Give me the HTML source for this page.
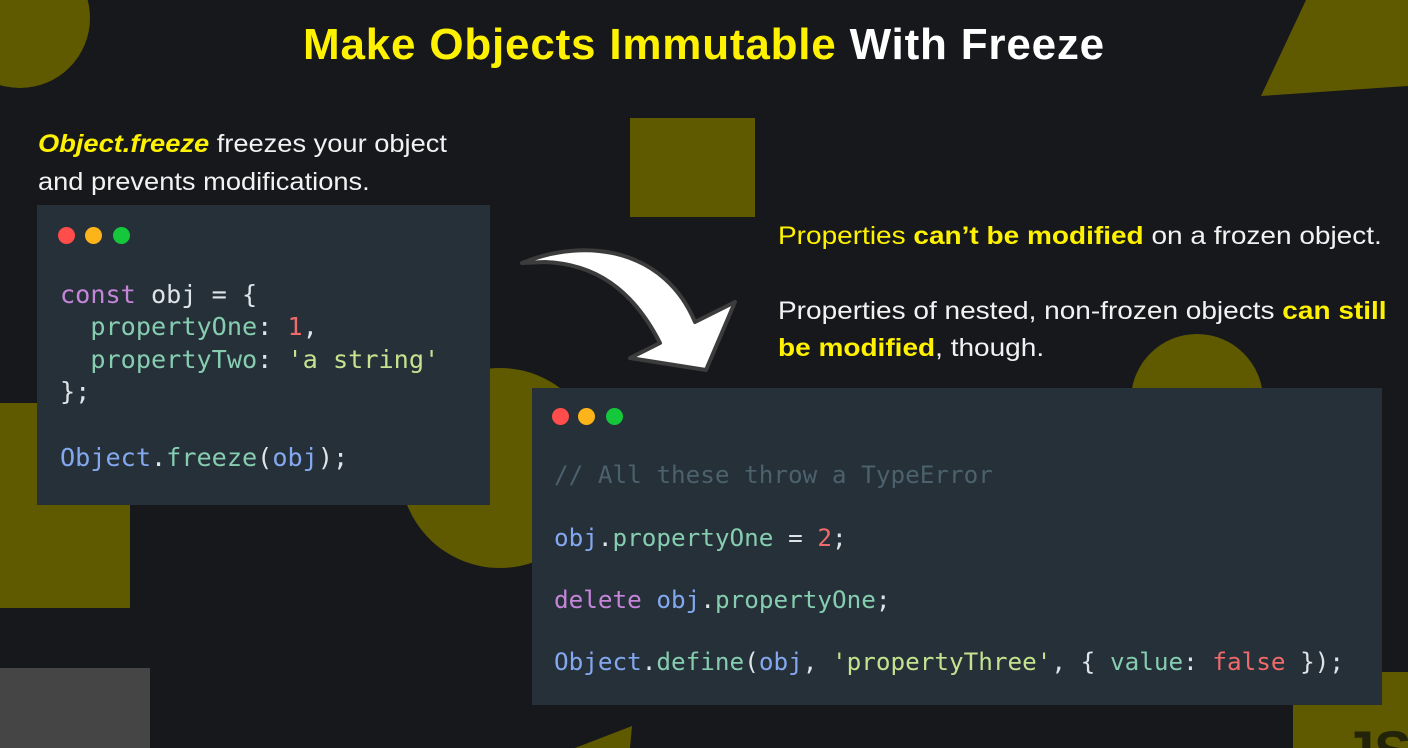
<!DOCTYPE html>
<html><head><meta charset="utf-8"><style>
*{margin:0;padding:0}
html,body{width:1408px;height:748px;overflow:hidden}
body{background:#17181c;position:relative;font-family:"Liberation Sans",sans-serif}
.a{position:absolute;white-space:nowrap}
.y{color:#fff200}
.w{color:#f2f2f2}
.code{position:absolute;background:#253039;font-family:"DejaVu Sans Mono","Liberation Mono",monospace;color:#dfe4e8}
.dot{position:absolute;width:17px;height:17px;border-radius:50%}
.p{color:#c585d8}.t{color:#86cdb0}.b{color:#84a8ef}.r{color:#ef6a6a}.s{color:#c5e28f}.c{color:#4c616c}
.ln{position:absolute;white-space:pre}
</style></head><body>
<svg class="a" style="left:0;top:0" width="1408" height="748">
<circle cx="20" cy="18" r="70" fill="#5f5a00"/>
<rect x="0" y="403" width="130" height="205" fill="#5f5a00"/>
<circle cx="500" cy="468" r="100" fill="#5f5a00"/>
<rect x="630" y="118" width="125" height="99" fill="#5f5a00"/>
<polygon points="1261,96 1306,0 1408,0 1408,86" fill="#5f5a00"/>
<circle cx="1197" cy="400" r="66" fill="#5f5a00"/>
<rect x="1293" y="672" width="115" height="76" fill="#5f5a00"/>
<rect x="0" y="668" width="150" height="80" fill="#454545"/>
<polygon points="575,748 632,726 630,748" fill="#5f5a00"/>
<path d="M522,263 C588,236 665,250 695,322 L735,302 L706,370 L630,358 L660,343 C632,288 594,264 545,262 Z" fill="#fff" stroke="#3c3c3c" stroke-width="4" stroke-linejoin="round"/>
<text x="1343" y="770" font-family="Liberation Sans" font-weight="bold" font-size="56" fill="#23230a">JS</text>
</svg>
<div class="a" style="left:0;width:1408px;top:20px;text-align:center;font-size:44px;font-weight:bold;color:#fff;letter-spacing:0.8px"><span class="y">Make Objects Immutable</span> With Freeze</div>
<div class="a w" style="left:38px;top:125px;font-size:25px;line-height:38px;transform:scaleX(1.09);transform-origin:0 0"><b><i class="y">Object.freeze</i></b> freezes your object<br>and prevents modifications.</div>
<div class="code" style="left:37px;top:205px;width:453px;height:300px;font-size:25.2px">
<div class="dot" style="left:21px;top:22px;background:#fe4d4a"></div>
<div class="dot" style="left:48px;top:22px;background:#fdb31a"></div>
<div class="dot" style="left:76px;top:22px;background:#14c73b"></div>
<div class="ln" style="left:23px;top:75px"><span class="p">const</span> obj = {</div>
<div class="ln" style="left:23px;top:107px">  <span class="t">propertyOne</span>: <span class="r">1</span>,</div>
<div class="ln" style="left:23px;top:140px">  <span class="t">propertyTwo</span>: <span class="s">'a string'</span></div>
<div class="ln" style="left:23px;top:172px">};</div>
<div class="ln" style="left:23px;top:238px"><span class="b">Object</span>.<span class="t">freeze</span>(<span class="b">obj</span>);</div>
</div>
<div class="a w" style="left:778px;top:222px;font-size:25px;transform:scaleX(1.12);transform-origin:0 0"><span class="y">Properties <b>can’t be modified</b></span> on a frozen object.</div>
<div class="a w" style="left:778px;top:293px;font-size:25px;line-height:37px;transform:scaleX(1.12);transform-origin:0 0">Properties of nested, non-frozen objects <b class="y">can still</b><br><b class="y">be modified</b>, though.</div>
<div class="code" style="left:532px;top:388px;width:850px;height:317px;font-size:24.3px">
<div class="dot" style="left:20px;top:20px;background:#fe4d4a"></div>
<div class="dot" style="left:46px;top:20px;background:#fdb31a"></div>
<div class="dot" style="left:74px;top:20px;background:#14c73b"></div>
<div class="ln c" style="left:22px;top:72px">// All these throw a TypeError</div>
<div class="ln" style="left:22px;top:135px"><span class="b">obj</span>.<span class="t">propertyOne</span> = <span class="r">2</span>;</div>
<div class="ln" style="left:22px;top:197px"><span class="p">delete</span> <span class="b">obj</span>.<span class="t">propertyOne</span>;</div>
<div class="ln" style="left:22px;top:259px"><span class="b">Object</span>.<span class="t">define</span>(<span class="b">obj</span>, <span class="s">'propertyThree'</span>, { <span class="t">value</span>: <span class="r">false</span> });</div>
</div>
</body></html>
